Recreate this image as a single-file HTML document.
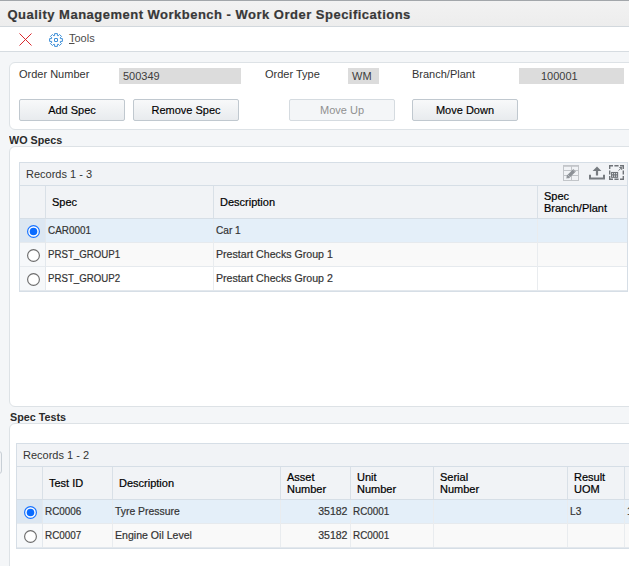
<!DOCTYPE html>
<html><head><meta charset="utf-8">
<style>
*{box-sizing:border-box;margin:0;padding:0}
html,body{width:629px;height:566px;overflow:hidden}
body{position:relative;background:#f4f6f8;font-family:"Liberation Sans",sans-serif;font-size:11px;color:#333}
.abs{position:absolute}
#title{left:0;top:0;width:629px;height:27px;background:linear-gradient(#f2f2f2,#ededed);border-top:1px solid #a2a6aa;border-bottom:1px solid #d2d8dd}
#title span{position:absolute;left:7.5px;top:5.5px;font-weight:bold;font-size:13px;letter-spacing:0.49px;-webkit-text-stroke:0.2px #383838;color:#383838;white-space:nowrap}
#tb{left:0;top:27px;width:629px;height:25px;background:#fff;border-bottom:1px solid #d6dce1}
.panel{background:#fff;border:1px solid #dde2e6;border-radius:6px}
.lbl{position:absolute;white-space:nowrap;color:#333}
.inp{position:absolute;background:#dcdcdc;height:16px;color:#3c3c3c;white-space:nowrap}
.btn{position:absolute;height:22px;border:1px solid #c0c8cf;border-radius:2px;background:linear-gradient(#f8f9fa,#e8ebee);text-align:center;line-height:20px;color:#000;white-space:nowrap}
.btn{-webkit-text-stroke:0.15px #000}
.btn.dis{-webkit-text-stroke:0;background:#f4f6f8;border-color:#d5dbe0;color:#909090}
.sect{position:absolute;font-weight:bold;color:#2a2a2a;white-space:nowrap;transform:scaleX(0.978);transform-origin:0 0}
.grid{position:absolute;border:1px solid #d6dee6;background:#fff;overflow:hidden}
.rec{position:absolute;left:0;top:0;right:0;height:23px;background:#f1f3f6;border-bottom:1px solid #d6dee6}
.rec span{position:absolute;left:6px;top:6px;color:#333}
.t{position:absolute;white-space:nowrap}
.hd{position:absolute;background:#f1f3f6;border-bottom:1px solid #d6dee6}
.vl{position:absolute;width:1px;background:#dfe5ea}
.hdt{-webkit-text-stroke:0.2px #000}
.cell{color:#333;transform-origin:0 0;-webkit-text-stroke:0.2px #333}
.radio{position:absolute;width:13px;height:13px;border-radius:50%;border:1px solid #666;background:#fff}
.radio.on{border:2px solid #1a73e8;background:#fff}
.radio.on::after{content:"";position:absolute;left:1px;top:1px;width:7px;height:7px;border-radius:50%;background:#0a64ff}
</style></head>
<body>
<div id="title" class="abs"><span>Quality Management Workbench - Work Order Specifications</span></div>
<div id="tb" class="abs">
  <svg class="abs" style="left:19px;top:6px" width="13" height="13" viewBox="0 0 13 13"><path d="M0.5 0.5L12.5 12.5M12.5 0.5L0.5 12.5" stroke="#d81c22" stroke-width="0.95" fill="none"/></svg>
  <svg class="abs" style="left:49px;top:6px" width="14" height="14" viewBox="0 0 14 14"><g fill="none" stroke="#3d8fd8" stroke-width="1" stroke-linejoin="round"><path d="M5.60 2.62 L5.60 0.60 L8.40 0.60 L8.40 2.62 L9.11 2.91 L10.54 1.48 L12.52 3.46 L11.09 4.89 L11.38 5.60 L13.40 5.60 L13.40 8.40 L11.38 8.40 L11.09 9.11 L12.52 10.54 L10.54 12.52 L9.11 11.09 L8.40 11.38 L8.40 13.40 L5.60 13.40 L5.60 11.38 L4.89 11.09 L3.46 12.52 L1.48 10.54 L2.91 9.11 L2.62 8.40 L0.60 8.40 L0.60 5.60 L2.62 5.60 L2.91 4.89 L1.48 3.46 L3.46 1.48 L4.89 2.91Z"/><rect x="5.5" y="5.5" width="3" height="3" rx="0.2"/></g></svg>
  <span class="t" style="left:69px;top:5px;color:#4c4c4c"><u>T</u>ools</span>
</div>

<div class="abs panel" style="left:9px;top:62px;width:640px;height:68px"></div>
<span class="lbl" style="left:19px;top:68px">Order Number</span>
<div class="inp" style="left:119px;top:68px;width:122px"><span class="t" style="left:4px;top:2px">500349</span></div>
<span class="lbl" style="left:265px;top:68px">Order Type</span>
<div class="inp" style="left:348px;top:68px;width:31px"><span class="t" style="left:4px;top:2px">WM</span></div>
<span class="lbl" style="left:412px;top:68px">Branch/Plant</span>
<div class="inp" style="left:519px;top:68px;width:105px"><span class="t" style="left:22px;top:2px">100001</span></div>
<div class="btn" style="left:19px;top:99px;width:106px">Add Spec</div>
<div class="btn" style="left:133px;top:99px;width:106px">Remove Spec</div>
<div class="btn dis" style="left:289px;top:99px;width:106px">Move Up</div>
<div class="btn" style="left:412px;top:99px;width:106px">Move Down</div>

<span class="sect" style="left:9px;top:134px">WO Specs</span>
<div class="abs panel" style="left:9px;top:146px;width:640px;height:261px"></div>
<!-- GRID 1 -->
<div class="abs" style="left:19px;top:162px;width:609px;height:130px;border:1px solid #d6dee6;background:#fff"></div>
<div class="abs" style="left:20px;top:163px;width:607px;height:22px;background:#f1f3f6"></div>
<div class="abs" style="left:20px;top:185px;width:607px;height:1px;background:#d6dee6"></div>
<span class="t" style="left:26px;top:168px;color:#333">Records 1 - 3</span>
<svg class="abs" style="left:563px;top:165px" width="16" height="16" viewBox="0 0 16 16"><g fill="none" stroke="#c2c5c9" stroke-width="1"><rect x="0.5" y="0.5" width="15" height="15"/><path d="M0.5 5.5H15.5M0.5 10.5H15.5M8.5 0.5V15.5"/></g><rect x="0" y="0" width="16" height="1.8" fill="#c2c5c9"/><path d="M4.6 12.2L11.6 5.2" stroke="#8d9197" stroke-width="3.4" fill="none"/><path d="M3.3 13.6L3.8 11.2L5.7 13.1z" fill="#8d9197"/><path d="M5.2 10.2L6.6 11.6M10.4 5.0L11.8 6.4" stroke="#eef0f3" stroke-width="0.6" fill="none"/></svg>
<svg class="abs" style="left:589px;top:166px" width="16" height="14" viewBox="0 0 16 14"><path d="M8 0.5L12.4 5H9.1V9.6H6.9V5H3.6z" fill="#777b80"/><path d="M1 8.8V12.5H15V8.8" fill="none" stroke="#777b80" stroke-width="2"/></svg>
<svg class="abs" style="left:609px;top:165px" width="15" height="15" viewBox="0 0 15 15"><g fill="none" stroke="#6f7378" stroke-width="1.4"><path d="M0.7 4V0.7H4M5.4 0.7H9.6M11 0.7H14.3V4M14.3 5.4V9.6M14.3 11V14.3H11M9.6 14.3H5.4M4 14.3H0.7V11M0.7 9.6V5.4"/></g><g fill="none" stroke="#6f7378" stroke-width="1.1"><rect x="2.6" y="7.5" width="6" height="4.8"/><path d="M4.6 7.5V12.3M6.6 7.5V12.3M2.6 9.9H8.6"/><path d="M9.6 5.6L12.6 2.6M10.3 2.5H12.7V4.9" stroke-width="1"/></g></svg>
<!-- header -->
<div class="abs" style="left:20px;top:186px;width:607px;height:32px;background:#f1f3f6"></div>
<div class="abs" style="left:20px;top:218px;width:607px;height:1px;background:#d6dee6"></div>
<div class="vl" style="left:45px;top:186px;height:32px;background:#d9e0e7"></div>
<div class="vl" style="left:213px;top:186px;height:32px;background:#d9e0e7"></div>
<div class="vl" style="left:537px;top:186px;height:32px;background:#d9e0e7"></div>
<span class="t hdt" style="left:52px;top:196px;color:#000">Spec</span>
<span class="t hdt" style="left:220px;top:196px;color:#000">Description</span>
<span class="t hdt" style="left:544px;top:190px;color:#000;line-height:12px">Spec<br>Branch/Plant</span>
<!-- rows -->
<div class="abs" style="left:20px;top:219px;width:607px;height:23px;background:#e4eff9"></div>
<div class="abs" style="left:20px;top:219px;width:25px;height:23px;background:#dce7f2"></div>
<div class="abs" style="left:20px;top:242px;width:607px;height:1px;background:#e6eaee"></div>
<div class="abs" style="left:20px;top:243px;width:607px;height:23px;background:#f9f9f9"></div>
<div class="abs" style="left:20px;top:243px;width:25px;height:47px;background:#f6f8fa"></div>
<div class="abs" style="left:20px;top:266px;width:607px;height:1px;background:#e6eaee"></div>
<div class="abs" style="left:20px;top:290px;width:607px;height:1px;background:#e3e8ed"></div>
<div class="vl" style="left:45px;top:219px;height:71px;background:#e3e8ed"></div>
<div class="vl" style="left:213px;top:219px;height:71px;background:#e9ecef"></div>
<div class="vl" style="left:537px;top:219px;height:71px;background:#e9ecef"></div>
<svg class="abs" style="left:27px;top:225px" width="13" height="13" viewBox="0 0 13 13"><circle cx="6.5" cy="6.5" r="5.9" fill="#fff" stroke="#1873ff" stroke-width="1.2"/><circle cx="6.5" cy="6.5" r="3.8" fill="#0a6bff"/></svg>
<svg class="abs" style="left:27px;top:249px" width="13" height="13" viewBox="0 0 13 13"><circle cx="6.5" cy="6.5" r="5.9" fill="#fff" stroke="#6d6d6d" stroke-width="1.15"/></svg>
<svg class="abs" style="left:27px;top:273px" width="13" height="13" viewBox="0 0 13 13"><circle cx="6.5" cy="6.5" r="5.9" fill="#fff" stroke="#6d6d6d" stroke-width="1.15"/></svg>
<span class="t cell" style="left:48px;top:224px;transform:scaleX(0.90)">CAR0001</span>
<span class="t cell" style="left:216px;top:224px;transform:scaleX(0.92)">Car 1</span>
<span class="t cell" style="left:48px;top:248px;transform:scaleX(0.88)">PRST_GROUP1</span>
<span class="t cell" style="left:216px;top:248px;transform:scaleX(0.965)">Prestart Checks Group 1</span>
<span class="t cell" style="left:48px;top:272px;transform:scaleX(0.88)">PRST_GROUP2</span>
<span class="t cell" style="left:216px;top:272px;transform:scaleX(0.965)">Prestart Checks Group 2</span>

<span class="sect" style="left:10px;top:411px">Spec Tests</span>
<div class="abs panel" style="left:9px;top:423px;width:640px;height:200px"></div>
<!-- GRID 2 -->
<div class="abs" style="left:16px;top:443px;width:640px;height:106px;border:1px solid #d6dee6;background:#fff"></div>
<div class="abs" style="left:17px;top:444px;width:620px;height:22px;background:#f1f3f6"></div>
<div class="abs" style="left:17px;top:466px;width:620px;height:1px;background:#d6dee6"></div>
<span class="t" style="left:23px;top:449px;color:#333">Records 1 - 2</span>
<div class="abs" style="left:17px;top:467px;width:620px;height:32px;background:#f1f3f6"></div>
<div class="abs" style="left:17px;top:499px;width:620px;height:1px;background:#d6dee6"></div>
<div class="vl" style="left:42px;top:467px;height:32px;background:#d9e0e7"></div>
<div class="vl" style="left:112px;top:467px;height:32px;background:#d9e0e7"></div>
<div class="vl" style="left:280px;top:467px;height:32px;background:#d9e0e7"></div>
<div class="vl" style="left:350px;top:467px;height:32px;background:#d9e0e7"></div>
<div class="vl" style="left:433px;top:467px;height:32px;background:#d9e0e7"></div>
<div class="vl" style="left:567px;top:467px;height:32px;background:#d9e0e7"></div>
<div class="vl" style="left:624px;top:467px;height:32px;background:#d9e0e7"></div>
<span class="t hdt" style="left:49px;top:477px;color:#000">Test ID</span>
<span class="t hdt" style="left:119px;top:477px;color:#000">Description</span>
<span class="t hdt" style="left:287px;top:471px;color:#000;line-height:12px">Asset<br>Number</span>
<span class="t hdt" style="left:357px;top:471px;color:#000;line-height:12px">Unit<br>Number</span>
<span class="t hdt" style="left:440px;top:471px;color:#000;line-height:12px">Serial<br>Number</span>
<span class="t hdt" style="left:574px;top:471px;color:#000;line-height:12px">Result<br>UOM</span>
<div class="abs" style="left:17px;top:500px;width:620px;height:23px;background:#e4eff9"></div>
<div class="abs" style="left:17px;top:500px;width:25px;height:23px;background:#dce7f2"></div>
<div class="abs" style="left:17px;top:523px;width:620px;height:1px;background:#e6eaee"></div>
<div class="abs" style="left:17px;top:524px;width:620px;height:23px;background:#f9f9f9"></div>
<div class="abs" style="left:17px;top:524px;width:25px;height:23px;background:#f6f8fa"></div>
<div class="abs" style="left:17px;top:547px;width:620px;height:1px;background:#e3e8ed"></div>
<div class="vl" style="left:42px;top:500px;height:47px;background:#e3e8ed"></div>
<div class="vl" style="left:112px;top:500px;height:47px;background:#e9ecef"></div>
<div class="vl" style="left:280px;top:500px;height:47px;background:#e9ecef"></div>
<div class="vl" style="left:350px;top:500px;height:47px;background:#e9ecef"></div>
<div class="vl" style="left:433px;top:500px;height:47px;background:#e9ecef"></div>
<div class="vl" style="left:567px;top:500px;height:47px;background:#e9ecef"></div>
<div class="vl" style="left:624px;top:500px;height:47px;background:#e9ecef"></div>
<svg class="abs" style="left:24px;top:506px" width="13" height="13" viewBox="0 0 13 13"><circle cx="6.5" cy="6.5" r="5.9" fill="#fff" stroke="#1873ff" stroke-width="1.2"/><circle cx="6.5" cy="6.5" r="3.8" fill="#0a6bff"/></svg>
<svg class="abs" style="left:24px;top:530px" width="13" height="13" viewBox="0 0 13 13"><circle cx="6.5" cy="6.5" r="5.9" fill="#fff" stroke="#6d6d6d" stroke-width="1.15"/></svg>
<span class="t cell" style="left:45px;top:505px;transform:scaleX(0.90)">RC0006</span>
<span class="t cell" style="left:115px;top:505px;transform:scaleX(0.945)">Tyre Pressure</span>
<span class="t cell" style="left:280px;top:505px;width:67.5px;text-align:right;transform:scaleX(0.96);transform-origin:100% 0">35182</span>
<span class="t cell" style="left:353px;top:505px;transform:scaleX(0.90)">RC0001</span>
<span class="t cell" style="left:570px;top:505px;transform:scaleX(0.92)">L3</span>
<span class="t cell" style="left:627px;top:505px">1</span>
<span class="t cell" style="left:45px;top:529px;transform:scaleX(0.90)">RC0007</span>
<span class="t cell" style="left:115px;top:529px;transform:scaleX(0.96)">Engine Oil Level</span>
<span class="t cell" style="left:280px;top:529px;width:67.5px;text-align:right;transform:scaleX(0.96);transform-origin:100% 0">35182</span>
<span class="t cell" style="left:353px;top:529px;transform:scaleX(0.90)">RC0001</span>
<div class="abs" style="left:-10px;top:451px;width:12px;height:23px;border:1px solid #c8cfd6;border-radius:3px;background:#f3f4f6"></div>
</body></html>
